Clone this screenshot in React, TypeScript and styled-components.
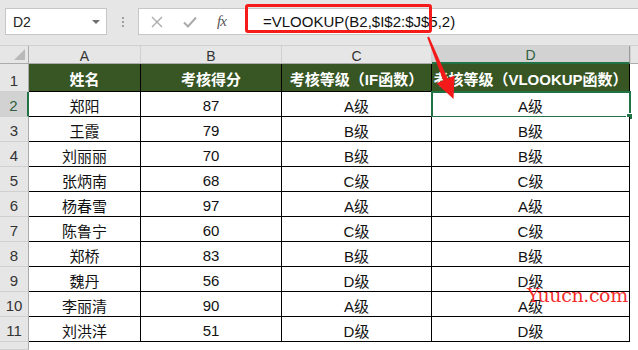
import React from "react";
import styled, { createGlobalStyle } from "styled-components";

const GlobalStyle = createGlobalStyle`
  html, body { margin: 0; padding: 0; background: #ffffff; }
  body { font-family: "Liberation Sans", "Noto Sans CJK SC", sans-serif; }
  * { box-sizing: border-box; }
`;

const Window = styled.div`
  position: relative;
  width: 638px;
  height: 350px;
  overflow: hidden;
  background: #ffffff;
`;

const FormulaBar = styled.div`
  position: relative;
  height: 46px;
  background: #e6e6e6;
  display: flex;
  align-items: flex-start;
  padding: 8px 0 0 5px;
  border-bottom: 1px solid #d0d0d0;
`;

const NameBox = styled.div`
  width: 102px;
  height: 27px;
  background: #ffffff;
  border: 1px solid #c6c6c6;
  display: flex;
  align-items: center;
  justify-content: space-between;
  padding: 0 6px 0 7px;
  font-size: 14px;
  color: #222;
`;

const DropTriangle = styled.span`
  width: 0;
  height: 0;
  border-left: 4px solid transparent;
  border-right: 4px solid transparent;
  border-top: 4px solid #6f6f6f;
`;

const Grip = styled.div`
  width: 31px;
  height: 27px;
  display: flex;
  flex-direction: column;
  align-items: center;
  justify-content: center;
  gap: 2px;
`;

const GripDot = styled.span`
  width: 2px;
  height: 2px;
  background: #a0a0a0;
`;

const FormulaBox = styled.div`
  flex: 1;
  height: 27px;
  background: #ffffff;
  border: 1px solid #c6c6c6;
  border-right: none;
  display: flex;
  align-items: center;
`;

const IconArea = styled.div`
  width: 107px;
  height: 100%;
  display: flex;
  align-items: center;
  padding-left: 12px;
  gap: 20px;
`;

const FxLabel = styled.span`
  font-family: "Liberation Serif", serif;
  font-style: italic;
  font-size: 15px;
  color: #555555;
  letter-spacing: -1px;
`;

const FormulaText = styled.div`
  flex: 1;
  padding-left: 17px;
  font-size: 15px;
  color: #111;
  white-space: nowrap;
`;

const Highlight = styled.div`
  position: absolute;
  left: 245px;
  top: 4px;
  width: 187px;
  height: 29px;
  border: 3px solid #f61b1b;
  border-radius: 3px;
`;

const Sheet = styled.div`
  display: grid;
  grid-template-columns: 29px 112px 141px 150px 198px 8px;
  grid-template-rows: 18px 28px repeat(10, 25px) 8px;
`;

const Corner = styled.div`
  position: relative;
  background: #e6e6e6;
  border-right: 1px solid #ababab;
  border-bottom: 1px solid #ababab;
  &::after {
    content: "";
    position: absolute;
    right: 3px;
    bottom: 3px;
    width: 0;
    height: 0;
    border-left: 11px solid transparent;
    border-bottom: 11px solid #b9b9b9;
  }
`;

const ColHead = styled.div<{ $active?: boolean }>`
  background: ${(p) => (p.$active ? "#d2d2d2" : "#e6e6e6")};
  border-right: 1px solid ${(p) => (p.$active ? "#9c9c9c" : "#d0d0d0")};
  border-bottom: ${(p) => (p.$active ? "2px solid #217346" : "1px solid #ababab")};
  display: flex;
  align-items: center;
  justify-content: center;
  padding-top: 2px;
  font-size: 14px;
  color: ${(p) => (p.$active ? "#2e5e3e" : "#333")};
`;

const RowHead = styled.div<{ $active?: boolean }>`
  background: ${(p) => (p.$active ? "#d2d2d2" : "#e6e6e6")};
  border-right: ${(p) => (p.$active ? "2px solid #217346" : "1px solid #ababab")};
  border-bottom: 1px solid #d0d0d0;
  display: flex;
  align-items: flex-end;
  justify-content: center;
  padding-bottom: 2px;
  font-size: 15px;
  color: ${(p) => (p.$active ? "#2e5e3e" : "#333")};
`;

const TitleCell = styled.div`
  background: #375623;
  border-right: 1px solid #000;
  border-bottom: 1px solid #000;
  display: flex;
  align-items: center;
  justify-content: center;
  padding-top: 1px;
  color: #ffffff;
  font-size: 15px;
  font-weight: 700;
  white-space: nowrap;
`;

const Cell = styled.div<{ $selected?: boolean }>`
  position: relative;
  background: #ffffff;
  border-right: 1px solid #000;
  border-bottom: 1px solid #000;
  display: flex;
  align-items: center;
  justify-content: center;
  padding-top: 2px;
  font-size: 15px;
  color: #111;
  white-space: nowrap;
  ${(p) =>
    p.$selected
      ? `
  &::before {
    content: "";
    position: absolute;
    left: -1px;
    top: -1px;
    right: -2px;
    bottom: -2px;
    border: 2px solid #217346;
  }
  &::after {
    content: "";
    position: absolute;
    right: -4px;
    bottom: -4px;
    width: 5px;
    height: 5px;
    background: #217346;
    border: 1px solid #ffffff;
  }`
      : ""}
`;

const Blank = styled.div<{ $head?: boolean }>`
  background: ${(p) => (p.$head ? "#e6e6e6" : "#ffffff")};
  border-left: ${(p) => (p.$head ? "1px solid #d0d0d0" : "none")};
  border-bottom: ${(p) => (p.$head ? "1px solid #ababab" : "none")};
`;

const Arrow = styled.svg`
  position: absolute;
  left: 0;
  top: 0;
  pointer-events: none;
`;

const Watermark = styled.div`
  position: absolute;
  left: 527px;
  top: 285px;
  font-family: "DejaVu Serif", "Liberation Serif", serif;
  font-size: 19px;
  line-height: 20px;
  letter-spacing: -0.4px;
  color: rgba(246, 20, 20, 0.92);
  pointer-events: none;
`;

const rows: [string, number, string, string][] = [
  ["郑阳", 87, "A级", "A级"],
  ["王霞", 79, "B级", "B级"],
  ["刘丽丽", 70, "B级", "B级"],
  ["张炳南", 68, "C级", "C级"],
  ["杨春雪", 97, "A级", "A级"],
  ["陈鲁宁", 60, "C级", "C级"],
  ["郑桥", 83, "B级", "B级"],
  ["魏丹", 56, "D级", "D级"],
  ["李丽清", 90, "A级", "A级"],
  ["刘洪洋", 51, "D级", "D级"],
];

export default function App() {
  return (
    <Window>
      <GlobalStyle />
      <FormulaBar>
        <NameBox>
          <span>D2</span>
          <DropTriangle />
        </NameBox>
        <Grip>
          <GripDot />
          <GripDot />
          <GripDot />
        </Grip>
        <FormulaBox>
          <IconArea>
            <svg width="12" height="12" viewBox="0 0 12 12">
              <path d="M1 1 L11 11 M11 1 L1 11" stroke="#ababab" strokeWidth="1.4" fill="none" />
            </svg>
            <svg width="14" height="12" viewBox="0 0 14 12">
              <path d="M1 6.5 L5 10.5 L13 1.5" stroke="#ababab" strokeWidth="2" fill="none" />
            </svg>
            <FxLabel>fx</FxLabel>
          </IconArea>
          <FormulaText>=VLOOKUP(B2,$I$2:$J$5,2)</FormulaText>
        </FormulaBox>
        <Highlight />
      </FormulaBar>
      <Sheet>
        <Corner />
        <ColHead>A</ColHead>
        <ColHead>B</ColHead>
        <ColHead>C</ColHead>
        <ColHead $active>D</ColHead>
        <Blank $head />

        <RowHead>1</RowHead>
        <TitleCell>姓名</TitleCell>
        <TitleCell>考核得分</TitleCell>
        <TitleCell>考核等级（IF函数）</TitleCell>
        <TitleCell>考核等级（VLOOKUP函数）</TitleCell>
        <Blank />

        {rows.map((r, i) => (
          <React.Fragment key={i}>
            <RowHead $active={i === 0}>{i + 2}</RowHead>
            <Cell>{r[0]}</Cell>
            <Cell>{r[1]}</Cell>
            <Cell>{r[2]}</Cell>
            <Cell $selected={i === 0}>{r[3]}</Cell>
            <Blank />
          </React.Fragment>
        ))}

        <RowHead />
        <Blank />
        <Blank />
        <Blank />
        <Blank />
        <Blank />
      </Sheet>
      <Arrow width="638" height="350" viewBox="0 0 638 350">
        <polygon
          points="427.2,37.4 429,36.6 447.6,78.4 454.5,75.6 453.5,99 436.5,83.2 443.2,80.4"
          fill="#f41a1a"
        />
      </Arrow>
      <Watermark>Yuucn.com</Watermark>
    </Window>
  );
}
